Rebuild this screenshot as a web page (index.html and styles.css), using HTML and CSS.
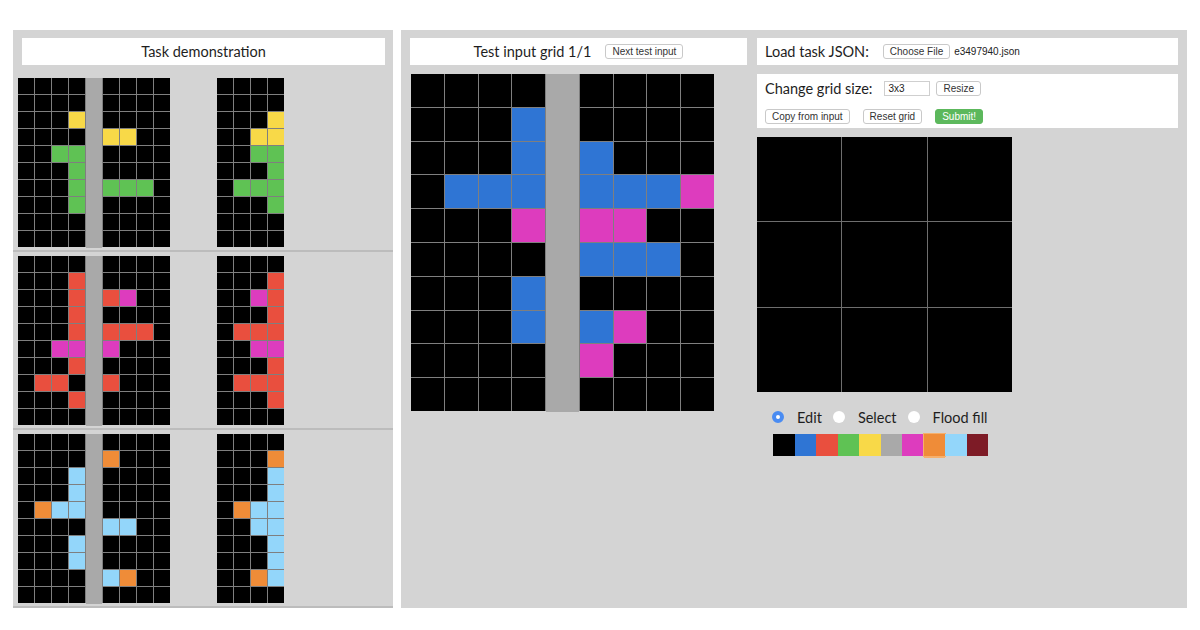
FILE: index.html
```html
<!DOCTYPE html>
<html lang="en">
<head>
<meta charset="UTF-8" />
<title>ARC testing interface</title>
<link rel="stylesheet" href="styles.css">
</head>
<body>

<div class="app">
  <section class="panel demo">
    <div class="title-box">Task demonstration</div>

    <div class="pair">
      <div class="grid small" data-rows="000050000 000050000 000450000 000054400 003350000 000350000 000353330 000350000 000050000 000050000"></div>
      <div class="grid small" data-rows="0000 0000 0004 0044 0033 0003 0333 0003 0000 0000"></div>
    </div>
    <div class="pair">
      <div class="grid small" data-rows="000050000 000250000 000252600 000250000 000252220 006656000 000250000 022052000 000250000 000050000"></div>
      <div class="grid small" data-rows="0000 0002 0062 0002 0222 0066 0002 0222 0002 0000"></div>
    </div>
    <div class="pair">
      <div class="grid small" data-rows="000050000 000057000 000850000 000850000 078850000 000058800 000850000 000850000 000058700 000050000"></div>
      <div class="grid small" data-rows="0000 0007 0008 0008 0788 0088 0008 0008 0078 0000"></div>
    </div>
  </section>

  <section class="panel workspace">
    <div class="test-col">
      <div class="title-box">
        <span>Test input grid 1/1</span>
        <button class="btn">Next test input</button>
      </div>
      <div class="grid test-grid" data-rows="000050000 000150000 000151000 011151116 000656600 000051110 000150000 000151600 000056000 000050000"></div>
    </div>

    <div class="edit-col">
      <div class="box load-box">
        <span class="label">Load task JSON:</span>
        <button class="btn file-btn">Choose File</button>
        <span class="file-name">e3497940.json</span>
      </div>

      <div class="box size-box">
        <div class="size-row">
          <span class="label">Change grid size:</span>
          <input class="size-input" value="3x3">
          <button class="btn resize">Resize</button>
        </div>
        <div class="action-row">
          <button class="btn">Copy from input</button>
          <button class="btn">Reset grid</button>
          <button class="btn submit">Submit!</button>
        </div>
      </div>

      <div class="grid output-grid" data-rows="000 000 000"></div>

      <div class="modes">
        <label><span class="radio on"></span>Edit</label>
        <label><span class="radio"></span>Select</label>
        <label><span class="radio"></span>Flood fill</label>
      </div>

      <div class="palette">
        <div class="swatch c0"></div>
        <div class="swatch c1"></div>
        <div class="swatch c2"></div>
        <div class="swatch c3"></div>
        <div class="swatch c4"></div>
        <div class="swatch c5"></div>
        <div class="swatch c6"></div>
        <div class="swatch c7 selected"></div>
        <div class="swatch c8"></div>
        <div class="swatch c9"></div>
      </div>
    </div>
  </section>
</div>

<script>
(() => {
  // build every grid from its data-rows string (one digit per cell)
  document.querySelectorAll('.grid[data-rows]').forEach(grid => {
    const rows = grid.getAttribute('data-rows').split(' ');
    if (grid.classList.contains('small')) {
      grid.style.gridTemplateColumns = `repeat(${rows[0].length}, 16px)`;
    }
    rows.forEach(row => {
      for (const ch of row) {
        const cell = document.createElement('div');
        cell.className = 'cell c' + ch;
        grid.appendChild(cell);
      }
    });
  });
})();
</script>

</body>
</html>
```

FILE: styles.css
```css
* {
  box-sizing: border-box;
}
body {
  margin: 0;
  background: #fff;
  font-family: Lato, 'Open Sans', sans-serif;
  color: #1e1e1e;
}
.app {
  display: flex;
  gap: 8px;
  padding: 30px 0 0 13px;
}
.panel {
  background: #d4d4d4;
}
.title-box {
  height: 27px;
  background: #fff;
  display: flex;
  align-items: center;
  justify-content: center;
  gap: 14px;
  font-size: 14.5px;
}

/* demonstration column */
.demo {
  width: 380px;
  padding-top: 8px;
}
.demo .title-box {
  margin: 0 8px 9px 9px;
}
.pair {
  display: flex;
  gap: 47px;
  padding: 4px 5px 3px;
  border-bottom: 2px solid #bcbcbc;
}

/* grids */
.grid {
  display: grid;
  gap: 1px;
  background: #7f7f7f;
}
.grid.small {
  grid-auto-rows: 16px;
}
.cell {
  background: #000;
}
.c0 { background: #000; }
.c1 { background: #2f75d4; }
.c2 { background: #e94f3e; }
.c3 { background: #5fc254; }
.c4 { background: #f8d948; }
.c5 { background: #a9a9a9; }
.c6 { background: #dd3cbe; }
.c7 { background: #ef8c38; }
.c8 { background: #93d6fa; }
.c9 { background: #7d1b26; }
.cell.c5 {
  box-shadow: 0 1px 0 #a9a9a9;
}

/* workspace */
.workspace {
  width: 786px;
  padding: 8px 9px;
  display: flex;
  gap: 10px;
  align-items: flex-start;
}
.test-col {
  width: 337px;
}
.test-grid {
  width: 303px;
  height: 337px;
  margin: 9px 0 0 1px;
  grid-template-columns: repeat(9, 1fr);
  grid-template-rows: repeat(10, 1fr);
}
.edit-col {
  width: 421px;
}
.box {
  background: #fff;
  padding: 0 8px;
}
.label {
  font-size: 14.5px;
}
.load-box {
  height: 27px;
  display: flex;
  align-items: center;
}
.file-btn {
  margin-left: 14px;
  padding: 0 5px;
}
.file-name {
  margin-left: 4px;
  font: 10px 'Liberation Sans', Arial, sans-serif;
  color: #222;
}
.size-box {
  margin-top: 9px;
  height: 54px;
  padding: 5px 8px 4px;
}
.size-row {
  display: flex;
  align-items: center;
  height: 19px;
}
.size-input {
  margin-left: 12px;
  width: 46px;
  height: 15px;
  border: 1px solid #cfcfcf;
  padding: 0 3px;
  font: 10px 'Liberation Sans', Arial, sans-serif;
  color: #222;
}
.resize {
  margin-left: 6px;
}
.action-row {
  display: flex;
  align-items: center;
  gap: 13px;
  height: 16px;
  margin-top: 10px;
}
.btn {
  height: 15px;
  padding: 0 6px;
  background: #fff;
  border: 1px solid #c9c9c9;
  border-radius: 3px;
  font: 10px 'Liberation Sans', Arial, sans-serif;
  line-height: 13px;
  color: #333;
}
.btn.submit {
  background: #5cb85c;
  border-color: #5cb85c;
  color: #fff;
}
.output-grid {
  margin-top: 9px;
  width: 255px;
  height: 255px;
  grid-template-columns: repeat(3, 1fr);
  grid-template-rows: repeat(3, 1fr);
  background: #6e6e6e;
}

/* mode radios */
.modes {
  display: flex;
  align-items: center;
  height: 16px;
  margin: 17px 0 0 15px;
  font-size: 14.5px;
}
.modes label {
  display: flex;
  align-items: center;
}
.modes label + label {
  margin-left: 11px;
}
.radio {
  width: 12px;
  height: 12px;
  border-radius: 50%;
  background: #fff;
  margin-right: 13px;
}
.radio.on {
  border: 4px solid #4a8cf2;
}

/* colour picker */
.palette {
  display: flex;
  margin: 9px 0 0 16px;
}
.swatch {
  width: 21.5px;
  height: 22px;
}
.swatch.selected {
  outline: 1px solid #f6b06c;
  box-shadow: 0 2px 0 #f6b06c;
}
```
